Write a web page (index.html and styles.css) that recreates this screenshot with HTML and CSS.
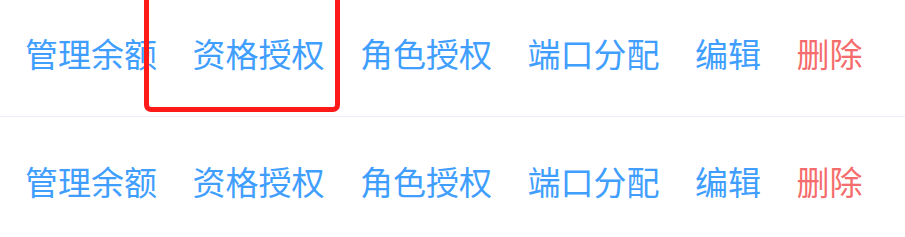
FILE: index.html
```
<!DOCTYPE html>
<html>
	<head>
		<meta charset="UTF-8">
		<title>操作列</title>
		<link rel="stylesheet" href="styles.css">
	</head>
	<body>
		<div class="table">
			<div class="row first">
				<a href="#" class="op">管理余额</a>
				<a href="#" class="op">资格授权</a>
				<a href="#" class="op">角色授权</a>
				<a href="#" class="op">端口分配</a>
				<a href="#" class="op">编辑</a>
				<a href="#" class="op danger">删除</a>
			</div>
			<div class="row">
				<a href="#" class="op">管理余额</a>
				<a href="#" class="op">资格授权</a>
				<a href="#" class="op">角色授权</a>
				<a href="#" class="op">端口分配</a>
				<a href="#" class="op">编辑</a>
				<a href="#" class="op danger">删除</a>
			</div>
			<!-- 标注框 -->
			<div class="mark"></div>
		</div>
	</body>
</html>
```

FILE: styles.css
```
*{padding:0;margin:0;}
a{text-decoration: none;}
body{background:#fff;font-family:"Noto Sans CJK SC","Noto Sans",sans-serif;overflow:hidden;}
.table{position:relative;width:905px;padding-top:1px;margin-top:-12px;}
.row{display:flex;align-items:center;gap:35.5px;height:127px;padding-left:25px;border-bottom:1px solid #ebeef5;}
.op{font-size:33px;line-height:40px;color:#409eff;white-space:nowrap;}
.op.danger{color:#f56c6c;}
.mark{position:absolute;left:144px;top:0;width:186px;height:114px;border:5px solid #ff1a1a;border-radius:7px;}
```
